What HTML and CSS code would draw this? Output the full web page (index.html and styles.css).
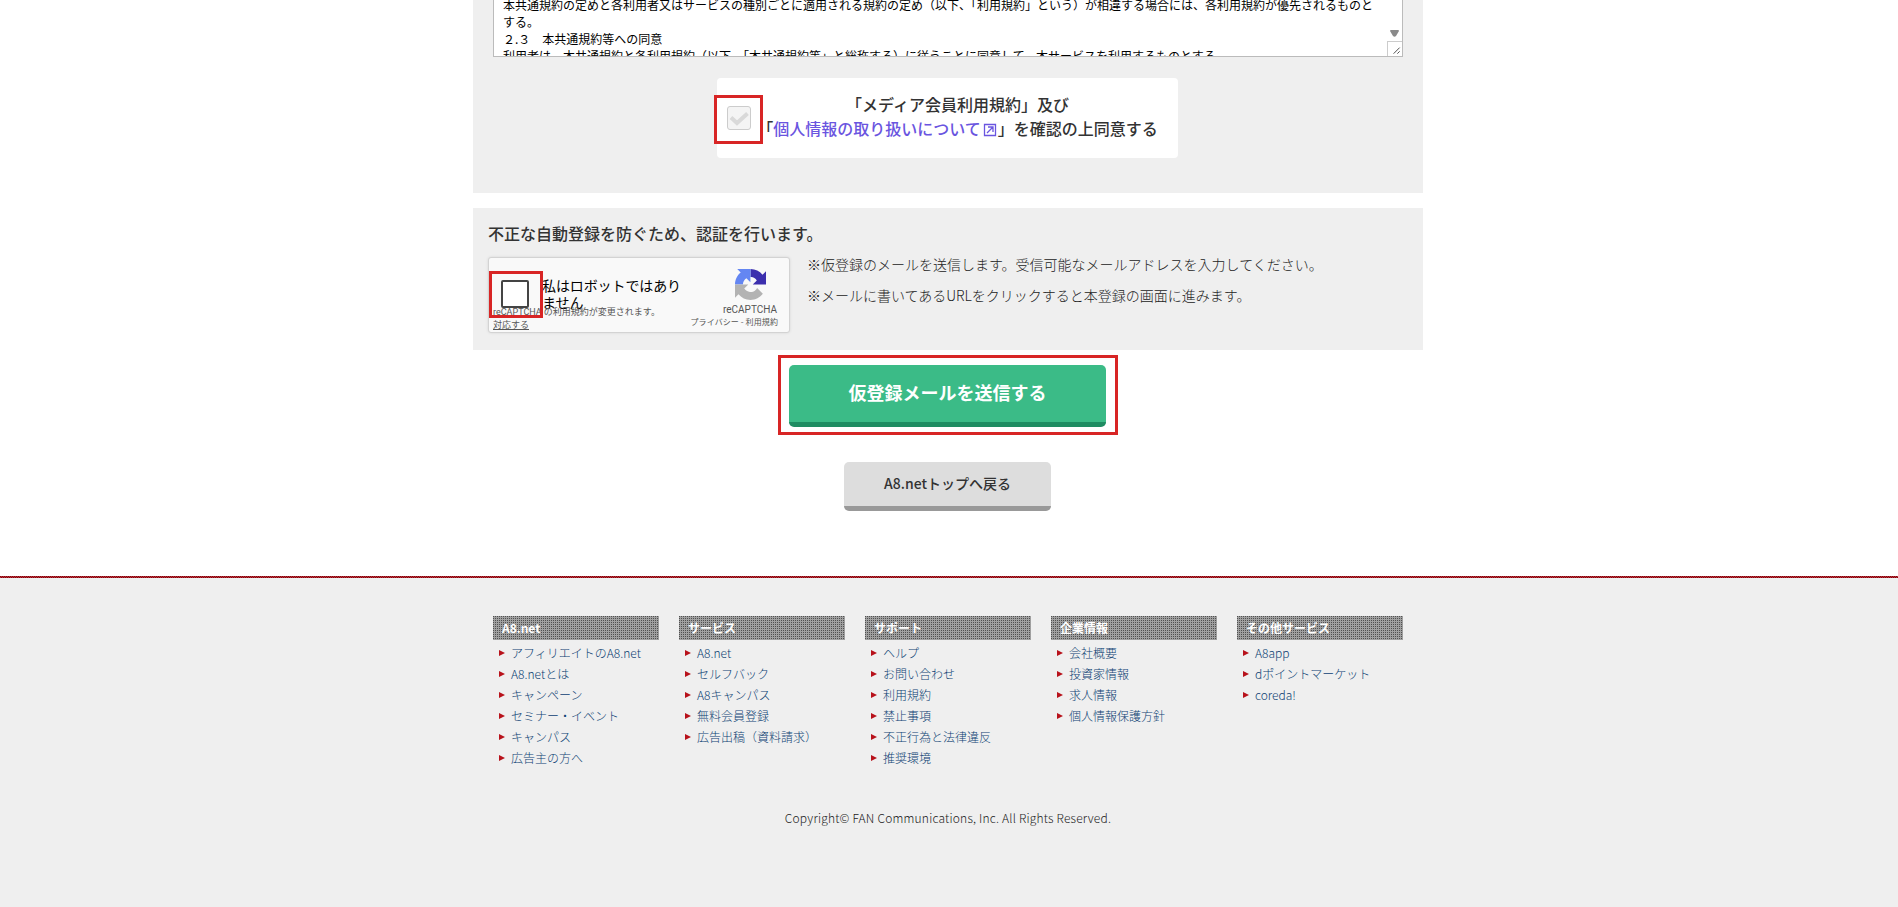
FILE: index.html
```html
<!DOCTYPE html>
<html lang="ja">
<head>
    <meta charset="utf-8">
    <title>A8.net 会員登録</title>
    <link rel="stylesheet" href="styles.css">
</head>
<body>
    <div id="wrapper">
        <div class="section terms">
            <div class="terms-box">
                <div class="terms-text">
                    <p>本共通規約の定めと各利用者又はサービスの種別ごとに適用される規約の定め（以下、「利用規約」という）が相違する場合には、各利用規約が優先されるものとする。</p>
                    <p>２.３　本共通規約等への同意</p>
                    <p>利用者は、本共通規約と各利用規約（以下、「本共通規約等」と総称する）に従うことに同意して、本サービスを利用するものとする。</p>
                </div>
                <div class="scrollbar">
                    <svg class="scroll-arrow" width="9" height="7" viewBox="0 0 9 7"><path d="M1 0h7q1 0 1 1L6 6q-1.5 1.5-3 0L0 1q0-1 1-1z" fill="#8a8a8a"/></svg>
                    <svg class="resizer" width="15" height="15" viewBox="0 0 15 15"><path d="M6 12.5l6.5-6.5M10 12.5l2.500-2.500" stroke="#444" fill="none"/></svg>
                </div>
            </div>
            <div class="agree">
                <span class="mark mark-agree"></span>
                <span class="agree-check">
                    <svg width="22" height="22" viewBox="0 0 22 22"><path d="M3 10.5l6 5.5 10.5-9.5" stroke="#d9d9d9" stroke-width="4" fill="none"/></svg>
                </span>
                <p>「メディア会員利用規約」及び<br>「<a href="#">個人情報の取り扱いについて<svg class="blank" width="17" height="14" viewBox="0 0 17 14"><path d="M3.5 1.5h11v11h-11zM6 10l6-6M7 4h5v5" stroke="#6a55e0" stroke-width="1.3" fill="none"/></svg></a>」を確認の上同意する</p>
            </div>
        </div>

        <div class="section auth">
            <h2>不正な自動登録を防ぐため、認証を行います。</h2>
            <div class="auth-row">
                <div class="recaptcha">
                    <span class="rc-box"></span>
                    <span class="rc-label">私はロボットではありません</span>
                    <span class="rc-notice">reCAPTCHA の利用規約が変更されます。<br><a href="#">対応する</a></span>
                    <div class="rc-brand">
                        <svg width="31" height="31" viewBox="0 0 64 64">
                            <path d="M64 32V4.700l-7.200 7.100C50.900 4.700 42 .1 32 .1v16.200c.5 0 .9 0 1.200.1 5 .4 9.300 3.100 11.800 7.100L36.700 32z" fill="#3c2fae"/>
                            <path d="M32 .1H4.600l7.200 7.200C4.600 13.100 0 22 0 32h16.300c0-.5 0-.8.1-1.100.4-5 3.100-9.300 7.100-11.800l8.300 8.300z" fill="#6486f2"/>
                            <path d="M0 32v27.300l7.200-7.200C13.100 59.300 22 63.900 32 63.900c10.400 0 19.600-5 25.500-12.600L45.700 39.400a15.500 15.500 0 0 1-4.700 5.300c-2.100 1.600-5 2.900-9 2.900-.5 0-.9 0-1.100-.1-5-.4-9.300-3.100-11.800-7.100l8.300-8.400z" fill="#b3b3b3"/>
                        </svg>
                        <span class="rc-name">reCAPTCHA</span>
                    </div>
                    <span class="rc-links">プライバシー - 利用規約</span>
                    <span class="mark mark-robot"></span>
                </div>
                <div class="notes">
                    <p>※仮登録のメールを送信します。受信可能なメールアドレスを入力してください。</p>
                    <p>※メールに書いてあるURLをクリックすると本登録の画面に進みます。</p>
                </div>
            </div>
        </div>

        <div class="buttons">
            <div class="mark-send"><a class="btn btn-send" href="#">仮登録メールを送信する</a></div>
            <a class="btn btn-top" href="#">A8.netトップへ戻る</a>
        </div>
    </div>

    <div id="footer">
        <div class="footer-nav">
            <div>
                <h3>A8.net</h3>
                <ul>
                    <li><a href="#">アフィリエイトのA8.net</a></li>
                    <li><a href="#">A8.netとは</a></li>
                    <li><a href="#">キャンペーン</a></li>
                    <li><a href="#">セミナー・イベント</a></li>
                    <li><a href="#">キャンパス</a></li>
                    <li><a href="#">広告主の方へ</a></li>
                </ul>
            </div>
            <div>
                <h3>サービス</h3>
                <ul>
                    <li><a href="#">A8.net</a></li>
                    <li><a href="#">セルフバック</a></li>
                    <li><a href="#">A8キャンパス</a></li>
                    <li><a href="#">無料会員登録</a></li>
                    <li><a href="#">広告出稿（資料請求）</a></li>
                </ul>
            </div>
            <div>
                <h3>サポート</h3>
                <ul>
                    <li><a href="#">ヘルプ</a></li>
                    <li><a href="#">お問い合わせ</a></li>
                    <li><a href="#">利用規約</a></li>
                    <li><a href="#">禁止事項</a></li>
                    <li><a href="#">不正行為と法律違反</a></li>
                    <li><a href="#">推奨環境</a></li>
                </ul>
            </div>
            <div>
                <h3>企業情報</h3>
                <ul>
                    <li><a href="#">会社概要</a></li>
                    <li><a href="#">投資家情報</a></li>
                    <li><a href="#">求人情報</a></li>
                    <li><a href="#">個人情報保護方針</a></li>
                </ul>
            </div>
            <div>
                <h3>その他サービス</h3>
                <ul>
                    <li><a href="#">A8app</a></li>
                    <li><a href="#">dポイントマーケット</a></li>
                    <li><a href="#">coreda!</a></li>
                </ul>
            </div>
        </div>
        <p class="copyright">Copyright© FAN Communications, Inc. All Rights Reserved.</p>
    </div>
</body>
</html>
```
FILE: styles.css
```css
* { box-sizing: border-box; }
html, body { height: 100%; }
body { margin: 0; display: flex; flex-direction: column; overflow: hidden; background: #fff; color: #333; font-family: "Noto Sans CJK JP", sans-serif; font-size: 14px; }
h2, h3, p, ul { margin: 0; padding: 0; }
a { text-decoration: none; }
#wrapper { width: 950px; height: 576px; flex: none; margin: 0 auto; position: relative; left: -1px; }
.section { background: #efefef; }

/* terms */
.terms { height: 193px; padding: 0 20px; }
.terms-box { display: flex; height: 57px; border: 1px solid #bbb; border-top: 0; background: #fff; overflow: hidden; }
.terms-text { flex: 1; padding: 0 9px; margin-top: -4px; font-size: 12px; line-height: 17px; color: #000; }
.scrollbar { width: 15px; display: flex; flex-direction: column; justify-content: flex-end; align-items: center; }
.resizer { margin-top: 4px; border-top: 1px solid #ccc; border-left: 1px solid #ccc; }
.agree { position: relative; width: 461px; height: 80px; margin: 21px 0 0 224px; padding: 14px 0 0 40px; border-radius: 4px; background: #fff; }
.agree p { width: 401px; text-align: center; font-size: 16px; line-height: 24px; font-weight: 500; white-space: nowrap; }
.agree a { color: #6a55e0; }
.blank { vertical-align: -2px; }
.agree-check { position: absolute; left: 10px; top: 28px; width: 24px; height: 24px; border: 1px solid #ccc; border-radius: 3px; background: #f4f4f4; }
.agree-check svg { display: block; }
.mark { position: absolute; border: 3px solid #d82525; }
.mark-agree { left: -3px; top: 17px; width: 49px; height: 49px; }

/* auth */
.auth { height: 142px; margin-top: 15px; padding: 13px 15px 15px; }
.auth h2 { font-size: 16px; line-height: 24px; font-weight: 500; }
.auth-row { display: flex; gap: 17px; margin-top: 12px; }
.recaptcha { position: relative; width: 302px; height: 76px; border: 1px solid #d3d3d3; border-radius: 3px; background: #f9f9f9; box-shadow: 0 0 3px rgba(0,0,0,.1); color: #000; }
.rc-box { position: absolute; left: 12px; top: 22px; width: 28px; height: 28px; border: 2px solid #444; border-radius: 2px; background: #fff; }
.rc-label { position: absolute; left: 53px; top: 19px; width: 142px; font-size: 14px; line-height: 17px; letter-spacing: -.1px; }
.rc-notice { position: absolute; left: 4px; top: 48px; font: 9px/13px Roboto, "Noto Sans CJK JP", sans-serif; color: #555; white-space: nowrap; }
.rc-notice a { color: #555; text-decoration: underline; }
.rc-brand { position: absolute; right: 11px; top: 11px; width: 56px; display: flex; flex-direction: column; align-items: center; }
.rc-brand svg { display: block; }
.rc-name { font: 10px/12px Roboto, sans-serif; margin-top: 4px; color: #555; }
.rc-links { position: absolute; right: 11px; top: 58px; font-size: 8px; line-height: 12px; color: #555; letter-spacing: .1px; }
.mark-robot { left: 0; top: 13px; width: 54px; height: 47px; }
.notes { margin-top: -1px; font-weight: 300; line-height: 16px; color: #222; }
.notes p + p { margin-top: 15px; }

/* buttons */
.buttons { display: flex; flex-direction: column; align-items: center; padding-top: 5px; }
.mark-send { width: 340px; height: 80px; padding: 7px 9px 7px 8px; border: 3px solid #d82525; }
.btn { display: block; text-align: center; border-radius: 5px; }
.btn-send { height: 62px; border-bottom: 5px solid #1f8c62; background: #3bbb87; color: #fff; font-size: 18px; line-height: 54px; font-weight: 700; }
.btn-top { width: 207px; height: 49px; margin: 27px 1px 0 0; border-bottom: 5px solid #999; background: #ddd; color: #333; font-size: 14px; line-height: 42px; font-weight: 500; }

/* footer */
#footer { flex: 1; background: #efefef; }
#footer::before { content: ""; display: block; height: 2px; background: conic-gradient(#b5343c 25%, #85000a 0 50%, #b5343c 0 75%, #85000a 0) 0 0 / 2px 2px; }
.footer-nav { width: 910px; margin: 38px auto 0; display: grid; grid-template-columns: repeat(5, 166px); gap: 20px; position: relative; left: -1px; }
.footer-nav h3 { height: 24px; padding-left: 9px; color: #fff; font-size: 12px; line-height: 23px; font-weight: 700; background: conic-gradient(#a0a0a0 75%, #505050 0) 0 0 / 2px 2px; }
.footer-nav ul { list-style: none; padding: 2px 0 0 6px; }
.footer-nav li { display: flex; align-items: center; height: 21px; font-size: 12px; font-weight: 300; }
.footer-nav li::before { content: ""; margin-right: 6px; border: 3px solid transparent; border-left: 6px solid #b8121b; border-right: 0; }
.footer-nav a { color: #0d3f73; }
.copyright { margin-top: 41px; padding-right: 2px; text-align: center; font-size: 12px; line-height: 18px; font-weight: 300; letter-spacing: .2px; color: #222; }
```
